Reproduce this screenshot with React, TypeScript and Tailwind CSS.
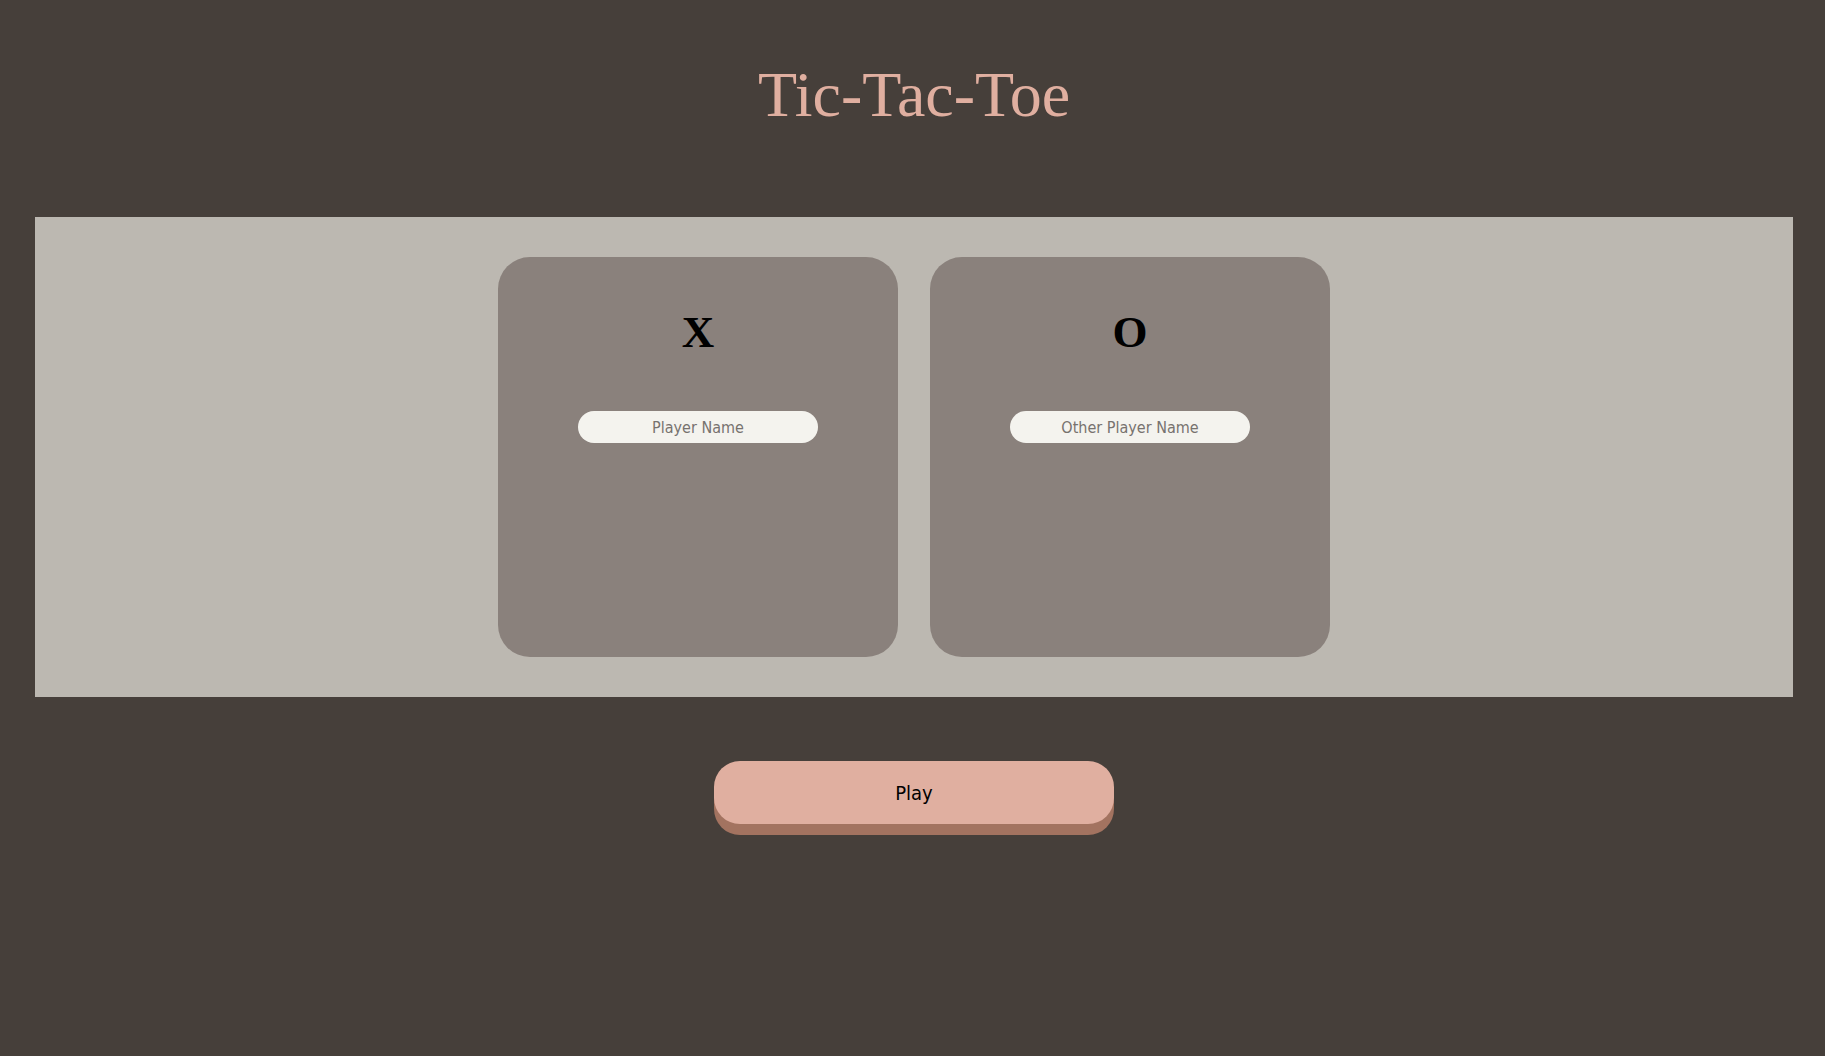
import { useState } from "react";

const PlayerCard = ({ symbol, placeholder }: { symbol: string; placeholder: string }) => {
    const [name, setName] = useState("");
    return (
        <div className="flex h-[400px] w-[400px] flex-col items-center rounded-[32px] bg-[#8a817c] pt-[49px]">
            <div className="text-[45px] font-bold leading-[normal] text-black [font-family:'Liberation_Serif',serif]">
                {symbol}
            </div>
            <input
                value={name}
                onChange={(e) => setName(e.target.value)}
                placeholder={placeholder}
                className="mt-[53px] h-[32px] w-[240px] rounded-full bg-[#f4f3ee] text-center text-[16px] text-black outline-none placeholder:text-[#77726e] [font-family:'DejaVu_Sans_Condensed','DejaVu_Sans',sans-serif]"
            />
        </div>
    );
};

export default function App() {
    return (
        <div className="min-h-[1056px] bg-[#463f3a]">
            <div className="ml-[35px] mr-[32px] flex flex-col items-center">
                <h1 className="mt-[58px] text-[64px] font-normal leading-[normal] text-[#e0afa0] [font-family:'Liberation_Serif',serif]">
                    Tic-Tac-Toe
                </h1>
                <div className="mt-[85px] flex w-full justify-center gap-8 bg-[#bcb8b1] py-10">
                    <PlayerCard symbol="X" placeholder="Player Name" />
                    <PlayerCard symbol="O" placeholder="Other Player Name" />
                </div>
                <button className="mt-16 h-[63px] w-[400px] rounded-[26px] bg-[#e0afa0] text-[20px] text-black shadow-[0_11px_0_#a37360] [font-family:'DejaVu_Sans_Condensed','DejaVu_Sans',sans-serif]">
                    Play
                </button>
            </div>
        </div>
    );
}
